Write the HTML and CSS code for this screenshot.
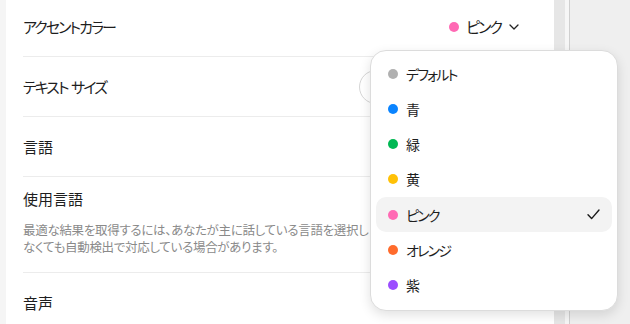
FILE: index.html
```html
<!DOCTYPE html>
<html lang="ja">
<head>
<meta charset="utf-8">
<link rel="stylesheet" href="styles.css">
</head>
<body class="app">
  <div class="edge"></div>
  <main class="panel">
    <div class="list">
      <div class="row">
        <span class="label kana">アクセントカラー</span>
        <button class="select">
          <span class="dot pink"></span>
          <span class="select-text kana">ピンク</span>
          <svg class="chev" width="10" height="6" viewBox="0 0 10 6"><path d="M1 1l4 4 4-4" fill="none" stroke="#222" stroke-width="1.3" stroke-linecap="round" stroke-linejoin="round"/></svg>
        </button>
      </div>
      <div class="row">
        <span class="label kana spaced">テキスト サイズ</span>
        <div class="stepper"><span class="round"></span></div>
      </div>
      <div class="row">
        <span class="label">言語</span>
      </div>
      <div class="row tall">
        <span class="label">使用言語</span>
        <p class="desc">最適な結果を取得するには、あなたが主に話している言語を選択し<br>なくても自動検出で対応している場合があります。</p>
      </div>
      <div class="row last">
        <span class="label">音声</span>
      </div>
    </div>
  </main>
  <div class="track"></div>
  <div class="sep"></div>
  <div class="side"></div>

  <div class="menu">
    <div class="item"><span class="dot grey"></span><span class="kana">デフォルト</span></div>
    <div class="item"><span class="dot blue"></span>青</div>
    <div class="item"><span class="dot green"></span>緑</div>
    <div class="item"><span class="dot yellow"></span>黄</div>
    <div class="item active"><span class="dot pink"></span><span class="kana">ピンク</span>
      <svg class="check" width="13" height="11" viewBox="0 0 13 11"><path d="M1 5.8l3.6 3.8L12 1" fill="none" stroke="#1a1a1a" stroke-width="1.4" stroke-linecap="round" stroke-linejoin="round"/></svg>
    </div>
    <div class="item"><span class="dot orange"></span><span class="kana">オレンジ</span></div>
    <div class="item"><span class="dot purple"></span>紫</div>
  </div>
</body>
</html>
```
FILE: styles.css
```css
html, body {
  margin: 0;
  padding: 0;
}
.app {
  width: 630px;
  height: 324px;
  overflow: hidden;
  display: flex;
  font-family: "Noto Sans CJK JP", "Noto Sans", sans-serif;
  font-feature-settings: "palt";
  color: #1e1e1e;
  background: #efefef;
  position: relative;
}
.edge {
  width: 6px;
  flex: none;
  background: #f5f5f5;
}
.panel {
  width: 548px;
  flex: none;
  background: #fff;
  overflow: hidden;
}
.track {
  width: 11px;
  flex: none;
  background: #e6e6e6;
}
.sep {
  width: 4px;
  flex: none;
  background: #f6f6f6;
  border-right: 1px solid #cfcfcf;
}
.side {
  flex: 1;
  background: #efefef;
}
.list {
  margin-top: -3px;
  padding: 0 17px;
}
.row {
  height: 59px;
  display: flex;
  align-items: center;
  justify-content: space-between;
  border-bottom: 1px solid #ececec;
}
.row.tall {
  flex-direction: column;
  align-items: flex-start;
  justify-content: flex-start;
  padding-top: 11px;
  box-sizing: border-box;
  height: 96px;
}
.row.last {
  border-bottom: none;
}
.label {
  font-size: 15px;
  line-height: 22px;
}
.kana {
  letter-spacing: -0.13em;
}
.spaced {
  word-spacing: 0.15em;
}
.desc {
  margin: 11px 0 0;
  font-size: 12.5px;
  line-height: 17px;
  color: #8a8a8a;
  letter-spacing: -0.3px;
  white-space: nowrap;
}
.select {
  display: flex;
  align-items: center;
  border: none;
  background: none;
  padding: 0;
  margin-right: 18px;
  font: inherit;
  font-size: 15px;
  color: #1e1e1e;
}
.select .dot {
  margin-right: 7px;
}
.select-text {
  margin-right: 8px;
}
.chev {
  display: block;
}
.stepper {
  display: flex;
  width: 178px;
}
.round {
  width: 34px;
  height: 34px;
  border: 1px solid #d6d6d6;
  border-radius: 50%;
  box-sizing: border-box;
}
.dot {
  width: 10px;
  height: 10px;
  border-radius: 50%;
  flex: none;
  display: inline-block;
}
.grey { background: #b0b0b0; }
.blue { background: #0a84ff; }
.green { background: #00b853; }
.yellow { background: #ffc107; }
.pink { background: #ff69b4; }
.orange { background: #ff6b2c; }
.purple { background: #9b4dff; }

.menu {
  position: absolute;
  left: 370px;
  top: 50px;
  width: 248px;
  height: 261px;
  box-sizing: border-box;
  background: #fff;
  border: 1px solid #dcdcdc;
  border-radius: 16px;
  box-shadow: 0 4px 12px rgba(0, 0, 0, 0.12);
  padding: 5px 5px 7px;
  display: flex;
  flex-direction: column;
}
.item {
  height: 35.3px;
  display: flex;
  align-items: center;
  padding: 0 12px;
  font-size: 14px;
  border-radius: 10px;
}
.item .dot {
  margin-right: 8px;
}
.item.active {
  background: #f3f3f3;
}
.check {
  margin-left: auto;
}
```
